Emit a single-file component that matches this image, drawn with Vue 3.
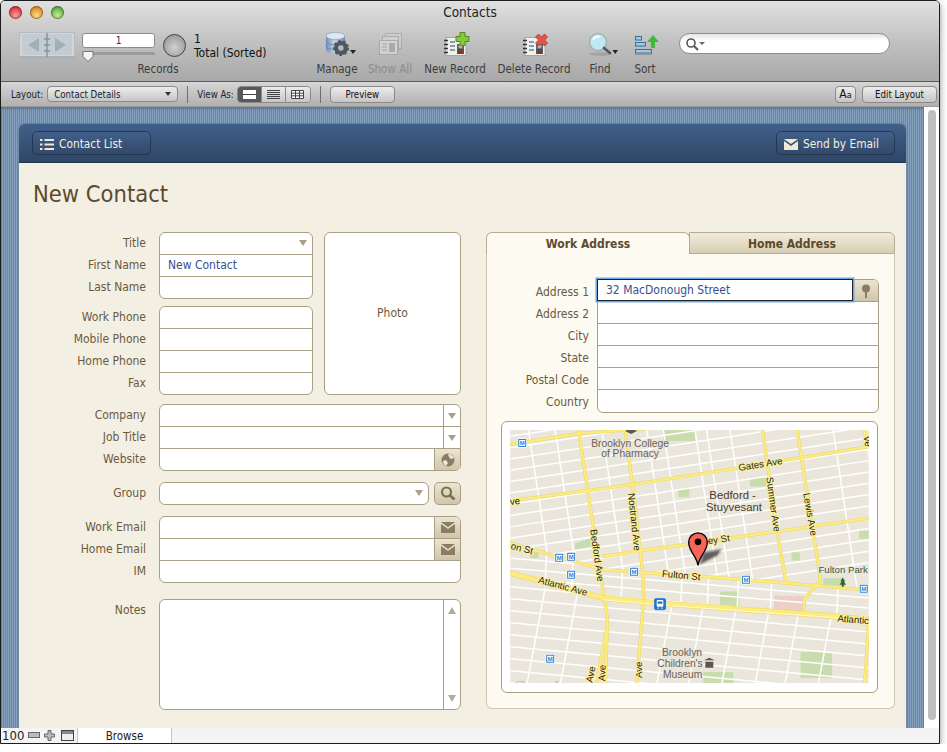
<template>
  <div class="window">
    <header class="chrome">
      <div class="titlebar">
        <div class="lights">
          <span class="light red"></span>
          <span class="light amber"></span>
          <span class="light green"></span>
        </div>
        <div class="win-title">Contacts</div>
        <div></div>
      </div>
      <div class="toolbar">
        <div class="records">
          <div class="rec-top">
            <svg class="book" width="56" height="27" viewBox="0 0 56 27">
              <rect x="0.5" y="0.5" width="55" height="25" fill="#d0d6da" stroke="#b4bcc2" />
              <rect x="3" y="2" width="24" height="21" fill="#c4ccd2" />
              <rect x="29" y="2" width="24" height="21" fill="#c4ccd2" />
              <rect x="0" y="24" width="56" height="3" fill="#aab2b8" />
              <path d="M9 13l11-7v14z" fill="#9fb0ba" />
              <path d="M47 13l-11-7v14z" fill="#9fb0ba" />
              <path d="M28 1v24M25 7h6M25 13h6M25 19h6" stroke="#87939b" stroke-width="1.5" fill="none" />
            </svg>
            <div class="rec-input">
              <div class="rec-field">1</div>
              <div class="slider">
                <svg class="thumb" width="12" height="11" viewBox="0 0 12 11">
                  <path d="M1 .5h10v5l-5 5-5-5z" fill="#f4f4f4" stroke="#777" />
                </svg>
              </div>
            </div>
            <div class="pie"></div>
            <div class="rec-count">
              <div>1</div>
              <div>Total (Sorted)</div>
            </div>
          </div>
          <div class="tool-label">Records</div>
        </div>

        <div class="tool w-manage">
          <svg width="40" height="28" viewBox="0 0 40 28">
            <defs>
              <linearGradient id="dbg" x1="0" x2="1" y1="0" y2="0">
                <stop offset="0" stop-color="#6f8db4" />
                <stop offset="0.45" stop-color="#c4d4e6" />
                <stop offset="1" stop-color="#6c88ac" />
              </linearGradient>
            </defs>
            <path d="M9 5v13c0 3 4 4.500 9.500 4.500S28 21 28 18V5z" fill="url(#dbg)" />
            <ellipse cx="18.500" cy="5" rx="9.500" ry="3.500" fill="#dfe8f2" stroke="#7f96b2" stroke-width="0.6" />
            <path d="M9 9.500c0 3 4 4.500 9.500 4.500S28 12.500 28 9.500M9 14c0 3 4 4.500 9.500 4.500S28 17 28 14" stroke="#6a83a3" stroke-width="0.8" fill="none" />
            <circle cx="24" cy="17" r="5" fill="none" stroke="#4e565e" stroke-width="4" />
            <circle cx="24" cy="17" r="7" fill="none" stroke="#4e565e" stroke-width="2" stroke-dasharray="2.500 2.500" />
            <circle cx="24" cy="17" r="2.200" fill="#b5bcc2" />
            <path d="M33 19h6l-3 4z" fill="#222" />
          </svg>
          <div class="tool-label">Manage</div>
        </div>

        <div class="tool w-show">
          <svg width="28" height="28" viewBox="0 0 28 28" opacity="0.55">
            <rect x="9.500" y="2.500" width="16" height="15" fill="#d4d4d4" stroke="#9a9a9a" />
            <rect x="6.500" y="5.500" width="16" height="15" fill="#dadada" stroke="#9a9a9a" />
            <rect x="3.500" y="9.500" width="18" height="14" fill="#e4e4e4" stroke="#9a9a9a" />
            <rect x="13" y="12" width="6" height="9" fill="#a69a8c" />
            <path d="M6 13h5M6 16h5M6 19h5" stroke="#888" />
          </svg>
          <div class="tool-label off">Show All</div>
        </div>

        <div class="tool w-new">
          <svg width="30" height="28" viewBox="0 0 30 28">
            <rect x="6" y="6.500" width="20" height="18" fill="#eef2ee" stroke="#8c948c" stroke-width="0.7" />
            <path d="M4 9.500h4M4 13.500h4M4 17.500h4M4 21.500h4" stroke="#333" stroke-width="1.400" />
            <path d="M10 11h5M10 15h5M10 19h5" stroke="#69808c" stroke-width="1.400" />
            <rect x="17" y="13" width="7" height="10" fill="#456a86" />
            <circle cx="20.500" cy="15.500" r="2" fill="#e6a47e" />
            <rect x="17.500" y="18" width="6" height="5" fill="#7c3a22" />
            <path d="M20 1.500h5v4h4v5h-4v4h-5v-4h-4v-5h4z" fill="#86c83e" stroke="#4f8a1e" />
          </svg>
          <div class="tool-label">New Record</div>
        </div>

        <div class="tool w-del">
          <svg width="30" height="28" viewBox="0 0 30 28">
            <rect x="6" y="6.500" width="20" height="18" fill="#eef2ee" stroke="#8c948c" stroke-width="0.7" />
            <path d="M4 9.500h4M4 13.500h4M4 17.500h4M4 21.500h4" stroke="#333" stroke-width="1.400" />
            <path d="M10 11h5M10 15h5M10 19h5" stroke="#69808c" stroke-width="1.400" />
            <rect x="17" y="13" width="7" height="10" fill="#456a86" />
            <circle cx="20.500" cy="15.500" r="2" fill="#e6a47e" />
            <rect x="17.500" y="18" width="6" height="5" fill="#7c3a22" />
            <path d="M19.500 3l3 3 3-3 3 3-3 3 3 3-3 3-3-3-3 3-3-3 3-3-3-3z" fill="#e4534a" stroke="#a52a24" stroke-width="0.7" />
          </svg>
          <div class="tool-label">Delete Record</div>
        </div>

        <div class="tool w-find">
          <svg width="36" height="28" viewBox="0 0 36 28">
            <ellipse cx="18" cy="23" rx="11" ry="1.800" fill="#8e8e8e" opacity="0.5" />
            <circle cx="16" cy="11" r="8.500" fill="#bfe8f2" stroke="#a4b2b8" stroke-width="1.600" />
            <path d="M11 9a6 6 0 0 1 7-3" stroke="#fff" stroke-width="1.600" fill="none" />
            <path d="M22 17l6 5" stroke="#555" stroke-width="2.600" stroke-linecap="round" />
            <path d="M30.500 19h5.500l-2.750 4z" fill="#222" />
          </svg>
          <div class="tool-label">Find</div>
        </div>

        <div class="tool w-sort">
          <svg width="28" height="28" viewBox="0 0 28 28">
            <rect x="4.500" y="5.500" width="6" height="3.500" fill="#a5c7e0" stroke="#33709c" />
            <rect x="4.500" y="11.500" width="10" height="3.500" fill="#a5c7e0" stroke="#33709c" />
            <rect x="4.500" y="18.500" width="16" height="3.500" fill="#a5c7e0" stroke="#33709c" />
            <path d="M22 4l6 7h-4v6h-4v-6h-4z" fill="#3fbb3c" />
            <rect x="4" y="23" width="17" height="1" fill="#999" />
          </svg>
          <div class="tool-label">Sort</div>
        </div>

        <div class="search">
          <svg width="22" height="14" viewBox="0 0 22 14">
            <circle cx="6" cy="6" r="4" fill="none" stroke="#555" stroke-width="1.600" />
            <path d="M9 9l4 4" stroke="#555" stroke-width="2" />
            <path d="M14 5h6l-3 3z" fill="#666" />
          </svg>
        </div>
      </div>
    </header>

    <div class="layoutbar">
      <span class="lb-label">Layout:</span>
      <div class="lb-select">
        <span>Contact Details</span>
        <i class="lb-caret"></i>
      </div>
      <span class="lb-sep"></span>
      <span class="lb-label">View As:</span>
      <div class="segs">
        <span class="seg on">
          <svg width="13" height="9" viewBox="0 0 13 9">
            <rect width="13" height="9" fill="#fff" />
            <rect y="4" width="13" height="1" fill="#444" />
          </svg>
        </span>
        <span class="seg">
          <svg width="13" height="9" viewBox="0 0 13 9">
            <path d="M0 .5h13M0 2.500h13M0 4.500h13M0 6.500h13M0 8.500h13" stroke="#444" />
          </svg>
        </span>
        <span class="seg">
          <svg width="13" height="9" viewBox="0 0 13 9">
            <path d="M.5.5h12v8H.5zM.5 3.200h12M.5 5.800h12M4.500.5v8M8.500.5v8" stroke="#444" fill="#fff" />
          </svg>
        </span>
      </div>
      <span class="lb-sep"></span>
      <button class="lb-btn preview">Preview</button>
      <span class="lb-gap"></span>
      <button class="lb-btn aa">A<small>a</small></button>
      <button class="lb-btn edit">Edit Layout</button>
    </div>

    <div class="main">
      <div class="stripes">
        <section class="card">
          <div class="card-head">
            <button class="head-btn">
              <svg width="14" height="11" viewBox="0 0 14 11">
                <path d="M0 1h2.500M4.500 1H14M0 5.500h2.500M4.500 5.500H14M0 10h2.500M4.500 10H14" stroke="#f1e9d6" stroke-width="2" />
              </svg>
              Contact List
            </button>
            <button class="head-btn">
              <svg width="14" height="11" viewBox="0 0 14 11">
                <path d="M0 0h14L7 5z" fill="#f1e9d6" />
                <path d="M0 2l7 5 7-5v9H0z" fill="#f1e9d6" />
              </svg>
              Send by Email
            </button>
          </div>

          <div class="card-body">
            <h1 class="page-title">New Contact</h1>
            <div class="columns">
              <div class="left">
                <div class="top-block">
                  <div class="top-fields">
                    <div class="line">
                      <div class="labels">
                        <div>Title</div>
                        <div>First Name</div>
                        <div>Last Name</div>
                      </div>
                      <div class="fields">
                        <div class="f"><i class="caret right-caret"></i></div>
                        <div class="f val">New Contact</div>
                        <div class="f"></div>
                      </div>
                    </div>
                    <div class="line">
                      <div class="labels">
                        <div>Work Phone</div>
                        <div>Mobile Phone</div>
                        <div>Home Phone</div>
                        <div>Fax</div>
                      </div>
                      <div class="fields">
                        <div class="f"></div>
                        <div class="f"></div>
                        <div class="f"></div>
                        <div class="f"></div>
                      </div>
                    </div>
                  </div>
                  <div class="photo">Photo</div>
                </div>

                <div class="line gap-9">
                  <div class="labels">
                    <div>Company</div>
                    <div>Job Title</div>
                    <div>Website</div>
                  </div>
                  <div class="fields">
                    <div class="f"><span class="drop"><i class="caret"></i></span></div>
                    <div class="f"><span class="drop"><i class="caret"></i></span></div>
                    <div class="f">
                      <span class="side">
                        <svg width="14" height="14" viewBox="0 0 14 14">
                          <circle cx="7" cy="7" r="6.500" fill="#8a7d66" />
                          <path d="M7 1c3 0 5 2 6 4l-3 1-2-2zM2 8l3-1 2 3-2 3c-2-1-3-3-3-5z" fill="#efe8d8" />
                        </svg>
                      </span>
                    </div>
                  </div>
                </div>

                <div class="line gap-11">
                  <div class="labels"><div>Group</div></div>
                  <div class="group-row">
                    <div class="fields grow">
                      <div class="f"><i class="caret right-caret"></i></div>
                    </div>
                    <div class="search-btn">
                      <svg width="16" height="15" viewBox="0 0 16 15">
                        <circle cx="6.500" cy="6" r="4.500" fill="none" stroke="#7a6f58" stroke-width="2.200" />
                        <path d="M10 9.500l4.500 4" stroke="#7a6f58" stroke-width="2.800" />
                      </svg>
                    </div>
                  </div>
                </div>

                <div class="line gap-11">
                  <div class="labels">
                    <div>Work Email</div>
                    <div>Home Email</div>
                    <div>IM</div>
                  </div>
                  <div class="fields">
                    <div class="f">
                      <span class="side">
                        <svg width="14" height="11" viewBox="0 0 14 11">
                          <path d="M0 0h14L7 5z" fill="#8a7d66" />
                          <path d="M0 2l7 5 7-5v9H0z" fill="#8a7d66" />
                        </svg>
                      </span>
                    </div>
                    <div class="f">
                      <span class="side">
                        <svg width="14" height="11" viewBox="0 0 14 11">
                          <path d="M0 0h14L7 5z" fill="#8a7d66" />
                          <path d="M0 2l7 5 7-5v9H0z" fill="#8a7d66" />
                        </svg>
                      </span>
                    </div>
                    <div class="f"></div>
                  </div>
                </div>

                <div class="line gap-16">
                  <div class="labels"><div>Notes</div></div>
                  <div class="notes">
                    <div class="notes-bar">
                      <i class="tri up"></i>
                      <i class="tri"></i>
                    </div>
                  </div>
                </div>
              </div>

              <div class="right">
                <div class="tabs">
                  <div class="tab active">Work Address</div>
                  <div class="tab">Home Address</div>
                </div>
                <div class="panel">
                  <div class="addr">
                    <div class="labels addr-labels">
                      <div>Address 1</div>
                      <div>Address 2</div>
                      <div>City</div>
                      <div>State</div>
                      <div>Postal Code</div>
                      <div>Country</div>
                    </div>
                    <div class="fields addr-fields">
                      <div class="f f-first">
                        <div class="focus">32 MacDonough Street</div>
                        <span class="pin-btn">
                          <svg width="10" height="14" viewBox="0 0 10 14">
                            <circle cx="5" cy="4.500" r="4" fill="#8a7d66" />
                            <rect x="4" y="8" width="2" height="6" fill="#8a7d66" />
                          </svg>
                        </span>
                      </div>
                      <div class="f"></div>
                      <div class="f"></div>
                      <div class="f"></div>
                      <div class="f"></div>
                      <div class="f"></div>
                    </div>
                  </div>

                  <div class="map-box">
                    <svg class="map" width="359" height="253" viewBox="60 45 1077 760">
                      <defs>
                        <clipPath id="north">
                          <path d="M60 45H1137V525L890 505 640 485 340 465 130 405 60 385z" />
                        </clipPath>
                        <clipPath id="middle">
                          <path d="M60 385L130 405 340 465 640 485 890 505 1137 525V615L1040 605 500 565 340 550 60 475z" />
                        </clipPath>
                        <clipPath id="south">
                          <path d="M60 475L340 550 500 565 1040 605 1137 615V805H60z" />
                        </clipPath>
                        <filter id="soft" x="-20%" y="-20%" width="140%" height="140%">
                          <feGaussianBlur stdDeviation="3" />
                        </filter>
                      </defs>
                      <rect x="60" y="45" width="1077" height="760" fill="#ebe6dc" />

                      <g fill="#c9dcae">
                        <rect x="520" y="45" width="95" height="33" />
                        <rect x="565" y="222" width="33" height="25" />
                        <rect x="780" y="188" width="48" height="27" />
                        <path d="M255 385l45-15 8 25-53 8z" />
                        <rect x="690" y="530" width="58" height="45" />
                        <rect x="932" y="712" width="95" height="78" />
                        <rect x="640" y="772" width="90" height="33" />
                        <rect x="905" y="412" width="25" height="25" />
                        <rect x="1108" y="348" width="29" height="24" />
                        <rect x="1000" y="490" width="65" height="22" />
                        <rect x="120" y="410" width="25" height="20" />
                      </g>
                      <rect x="852" y="543" width="88" height="47" fill="#ebd0c8" />

                      <g stroke="#fff" stroke-width="4.500" fill="none">
                        <g clip-path="url(#north)">
                          <line v-for="s in northStreets" :key="s.k" :x1="s.x1" :y1="s.y1" :x2="s.x2" :y2="s.y2" />
                        </g>
                        <g clip-path="url(#middle)">
                          <line v-for="s in middleStreets" :key="s.k" :x1="s.x1" :y1="s.y1" :x2="s.x2" :y2="s.y2" />
                        </g>
                        <g clip-path="url(#south)">
                          <line v-for="s in southStreets" :key="s.k" :x1="s.x1" :y1="s.y1" :x2="s.x2" :y2="s.y2" />
                        </g>
                      </g>

                      <g fill="none" stroke-linejoin="round">
                        <g stroke="#e9d56e" stroke-width="10">
                          <path v-for="r in roads" :key="r" :d="r" />
                        </g>
                        <g stroke="#fdec7c" stroke-width="7">
                          <path v-for="r in roads" :key="r" :d="r" />
                        </g>
                        <path d="M60 475L340 550 500 565 1040 605 1137 615" stroke="#e9d56e" stroke-width="17" />
                        <path d="M60 475L340 550 500 565 1040 605 1137 615" stroke="#fdec7c" stroke-width="14" />
                        <path d="M340 555L500 570 1040 609 1137 619" stroke="#fff" stroke-width="2" />
                      </g>

                      <g class="road-labels">
                        <text v-for="l in roadLabels" :key="l.t + l.x" :transform="`translate(${l.x} ${l.y}) rotate(${l.r})`">{{ l.t }}</text>
                      </g>
                      <g class="place-labels">
                        <text x="420" y="95">Brooklyn College</text>
                        <text x="420" y="127">of Pharmacy</text>
                        <text x="728" y="253" class="dark">Bedford -</text>
                        <text x="732" y="288" class="dark">Stuyvesant</text>
                        <text x="1060" y="475" class="green">Fulton Park</text>
                        <text x="576" y="724">Brooklyn</text>
                        <text x="570" y="757">Children's</text>
                        <text x="578" y="790">Museum</text>
                      </g>
                      <text x="68" y="838" class="google">Google</text>

                      <g v-for="m in metros" :key="m.x + '-' + m.y" :transform="`translate(${m.x} ${m.y})`">
                        <rect x="-14" y="-14" width="28" height="28" rx="3" fill="#fff" />
                        <rect x="-12" y="-12" width="24" height="24" rx="2" fill="#2f7fd6" />
                        <rect x="-9" y="-9" width="18" height="18" fill="#fff" />
                        <text class="metro-m" y="7">M</text>
                      </g>
                      <g transform="translate(510 568)">
                        <rect x="-19" y="-19" width="38" height="38" rx="7" fill="#1f74cc" stroke="#fff" stroke-width="2" />
                        <rect x="-10" y="-12" width="20" height="20" rx="3" fill="#fff" />
                        <rect x="-7" y="-8" width="14" height="7" fill="#1f74cc" />
                        <path d="M-8 12h5M3 12h5" stroke="#fff" stroke-width="3" />
                      </g>
                      <path d="M420 36h3v-6h-3zM405 48l18-9 18 9-18 9z" fill="#5e564a" />
                      <path d="M642 737l16-8 16 8zM646 741h24v18h-24z" fill="#5e564a" />
                      <path d="M1058 488l8 12h-4l7 10h-7v6h-6v-6h-7l7-10h-4z" fill="#33603e" />

                      <path d="M628 450L642 412 695 403 682 422z" fill="#333" opacity="0.75" filter="url(#soft)" />
                      <path d="M624 452c-3-28-28-42-28-70a28 28 0 0 1 56 0c0 28-25 42-28 70z" fill="#f76458" stroke="#000" stroke-width="4" />
                      <circle cx="624" cy="381" r="10" fill="#000" />
                    </svg>
                  </div>
                </div>
              </div>
            </div>
          </div>
        </section>
      </div>
      <div class="scroll">
        <div class="scroll-thumb"></div>
      </div>
    </div>

    <footer class="status">
      <span class="zoom">100</span>
      <svg class="st-minus" width="12" height="7" viewBox="0 0 12 7"><rect x=".5" y=".5" width="11" height="5" fill="#bbb" stroke="#666" /></svg>
      <svg class="st-plus" width="11" height="11" viewBox="0 0 11 11"><path d="M4 .5h3v3.500h3.500v3H7v3.500H4V7H.5V4H4z" fill="#bbb" stroke="#666" /></svg>
      <svg class="st-split" width="13" height="11" viewBox="0 0 13 11"><rect x=".5" y=".5" width="12" height="10" fill="#eee" stroke="#444" /><rect x="1" y="1" width="11" height="3" fill="#888" /></svg>
      <span class="mode">Browse</span>
    </footer>
  </div>
</template>

<script setup>
const makeLines = (prefix, items, fn) =>
  items.map((c, i) => ({ k: prefix + i, ...fn(c) }))

const steps = (from, to, step) => {
  const out = []
  for (let v = from; v <= to; v += step) out.push(v)
  return out
}

// cross streets and avenues, each block of the map leans its own way
const northStreets = [
  ...makeLines('a', steps(30, 640, 34), (c) => ({ x1: 60, y1: c, x2: 1137, y2: c - 165 })),
  ...makeLines('b', [115, 195, 335, 520, 615, 720, 1030, 1125, 650, 470], (c) => ({ x1: c, y1: 45, x2: c + 78, y2: 560 })),
]
const middleStreets = [
  ...makeLines('c', steps(430, 540, 30), (c) => ({ x1: 60, y1: c, x2: 1137, y2: c + 90 })),
  ...makeLines('d', [170, 250, 400, 580, 660, 750, 850, 1050], (c) => ({ x1: c, y1: 400, x2: c - 10, y2: 620 })),
]
const southStreets = [
  ...makeLines('e', steps(480, 830, 36), (c) => ({ x1: 60, y1: c, x2: 1137, y2: c + 100 })),
  ...makeLines('f', [165, 265, 555, 650, 750, 850, 940, 1040], (c) => ({ x1: c, y1: 520, x2: c - 55, y2: 810 })),
]

const roads = [
  'M60 88L270 55 480 40',
  'M60 258L420 210 740 160 1137 95',
  'M265 45L310 340 350 600 352 630 320 805',
  'M352 630L345 805',
  'M405 45L430 230 460 490 460 560 440 805',
  'M818 45L860 340 888 500',
  'M922 45L990 480 990 500 945 550 940 600',
  'M335 425L720 370 1137 310',
  'M60 385L130 405 340 465 640 485 890 505 1137 525',
  'M1137 620L1125 805',
  'M1122 45L1137 90',
]

const roadLabels = [
  { t: 'Gates Ave', x: 747, y: 168, r: -9 },
  { t: 'Nostrand Ave', x: 414, y: 236, r: 84 },
  { t: 'Bedford Ave', x: 300, y: 345, r: 82 },
  { t: 'Summer Ave', x: 829, y: 188, r: 82 },
  { t: 'Lewis Ave', x: 940, y: 236, r: 80 },
  { t: 'ey St', x: 655, y: 388, r: -8 },
  { t: 'on St', x: 60, y: 402, r: 14 },
  { t: 'Fulton St', x: 515, y: 486, r: 5 },
  { t: 'Atlantic Ave', x: 143, y: 504, r: 15 },
  { t: 'Atlantic', x: 1042, y: 620, r: 5 },
  { t: 've', x: 60, y: 270, r: -6 },
  { t: 'Ave', x: 306, y: 805, r: -78 },
  { t: 'Ave', x: 345, y: 800, r: -88 },
  { t: 'Ave', x: 456, y: 790, r: -90 },
  { t: 've', x: 1122, y: 66, r: 82 },
]

const metros = [
  { x: 96, y: 84 },
  { x: 207, y: 429 },
  { x: 243, y: 426 },
  { x: 243, y: 480 },
  { x: 432, y: 471 },
  { x: 768, y: 495 },
  { x: 1122, y: 522 },
  { x: 180, y: 732 },
]
</script>

<style>
html,
body {
  margin: 0;
  background: #fff;
}
</style>

<style scoped>
.window {
  width: 940px;
  height: 744px;
  box-sizing: border-box;
  border: 1px solid #1c1c1c;
  border-radius: 5px 5px 0 0;
  box-shadow: 0 3px 7px rgba(0, 0, 0, 0.45);
  display: flex;
  flex-direction: column;
  overflow: hidden;
  font-family: "DejaVu Sans", sans-serif;
  font-stretch: condensed;
  font-size: 12px;
  background: #fff;
}

.chrome {
  height: 81px;
  flex: none;
  box-sizing: border-box;
  border-bottom: 1px solid #5a5a5a;
  background: linear-gradient(#e0e0e0, #bcbcbc 60%, #a9a9a9);
}

.titlebar {
  height: 22px;
  display: grid;
  grid-template-columns: 1fr auto 1fr;
  align-items: center;
}

.lights {
  display: flex;
  gap: 8px;
  padding-left: 8px;
}

.light {
  width: 13px;
  height: 13px;
  border-radius: 50%;
  box-shadow: inset 0 0 0 1px rgba(0, 0, 0, 0.35);
}

.red {
  background: radial-gradient(circle at 50% 70%, #f8a0a0, #d8303a 70%);
}

.amber {
  background: radial-gradient(circle at 50% 70%, #fbd88c, #d88a22 70%);
}

.green {
  background: radial-gradient(circle at 50% 70%, #c4ec98, #5fa83c 70%);
}

.win-title {
  font-size: 13.500px;
  color: #222;
}

.toolbar {
  display: flex;
  align-items: flex-start;
  padding: 8px 0 0 18px;
}

.records {
  width: 278px;
  flex: none;
  text-align: center;
}

.rec-top {
  display: flex;
  align-items: flex-start;
  height: 27px;
  text-align: left;
  margin-top: 1px;
}

.book {
  flex: none;
}

.rec-input {
  width: 73px;
  margin: 1px 0 0 7px;
  flex: none;
}

.rec-field {
  height: 13px;
  border: 1px solid #8c8c8c;
  border-radius: 3px;
  background: #fff;
  text-align: center;
  font-size: 10px;
  line-height: 13px;
  color: #1f2f6a;
}

.slider {
  position: relative;
  height: 3px;
  margin-top: 4px;
  background: #9a9a9a;
  border-radius: 2px;
}

.thumb {
  position: absolute;
  left: 0;
  top: -1px;
}

.pie {
  width: 21px;
  height: 21px;
  margin: 2px 0 0 8px;
  flex: none;
  border-radius: 50%;
  border: 1px solid #444;
  background: radial-gradient(circle at 50% 60%, #d0d0d0, #9a9a9a 80%);
}

.rec-count {
  margin: 0 0 0 8px;
  font-size: 12px;
  line-height: 14px;
  color: #111;
}

.tool-label {
  font-size: 11.500px;
  line-height: 14px;
  margin-top: 3px;
  color: #3c3c3c;
  white-space: nowrap;
}

.tool-label.off {
  color: #8c8c8c;
}

.tool {
  flex: none;
  display: flex;
  flex-direction: column;
  align-items: center;
}

.w-manage {
  width: 50px;
  margin-left: 15px;
}

.w-show {
  width: 56px;
}

.w-new {
  width: 74px;
}

.w-del {
  width: 74px;
  margin-left: 5px;
}

.w-find {
  width: 50px;
  margin-left: 4px;
}

.w-sort {
  width: 40px;
}

.search {
  width: 211px;
  height: 21px;
  margin: 2px 0 0 14px;
  padding-left: 5px;
  box-sizing: border-box;
  display: flex;
  align-items: center;
  border: 1px solid #8e8e8e;
  border-radius: 11px;
  background: linear-gradient(#e4e4e4, #fff 35%);
}

.layoutbar {
  height: 25px;
  flex: none;
  box-sizing: border-box;
  display: flex;
  align-items: center;
  padding: 0 2px 0 10px;
  border-bottom: 1px solid #9c9c9c;
  background: linear-gradient(#d6d6d6, #b0b0b0);
  font-size: 9.600px;
  color: #222;
}

.lb-label {
  white-space: nowrap;
}

.lb-select {
  width: 131px;
  height: 16px;
  box-sizing: border-box;
  margin-left: 4px;
  padding: 0 6px;
  display: flex;
  align-items: center;
  justify-content: space-between;
  border: 1px solid #8a8a8a;
  border-radius: 4px;
  background: linear-gradient(#ececec, #c6c6c6);
  color: #1c1c2e;
}

.lb-caret {
  width: 0;
  height: 0;
  border: 3.500px solid transparent;
  border-top: 4px solid #333;
  border-bottom: 0;
}

.lb-sep {
  width: 1px;
  height: 17px;
  margin: 0 9px;
  background: #6e6e6e;
}

.segs {
  display: flex;
  height: 17px;
  margin-left: 3px;
  border: 1px solid #8a8a8a;
  border-radius: 4px;
  overflow: hidden;
  box-sizing: border-box;
}

.seg {
  width: 24px;
  display: flex;
  align-items: center;
  justify-content: center;
  background: linear-gradient(#ececec, #c6c6c6);
  border-right: 1px solid #8a8a8a;
  box-sizing: border-box;
}

.seg:last-child {
  border-right: 0;
}

.seg.on {
  background: #55585c;
}

.lb-btn {
  height: 17px;
  box-sizing: border-box;
  border: 1px solid #8a8a8a;
  border-radius: 4px;
  background: linear-gradient(#ececec, #c6c6c6);
  font: inherit;
  font-stretch: condensed;
  color: #111;
  padding: 0;
}

.preview {
  width: 65px;
}

.lb-gap {
  flex: 1;
}

.aa {
  width: 21px;
  margin-right: 6px;
  font-size: 12px;
}

.aa small {
  font-size: 9px;
}

.edit {
  width: 75px;
}

.main {
  flex: 1;
  display: flex;
  min-height: 0;
}

.stripes {
  flex: 1;
  display: flex;
  padding: 17px 18px 0;
  background: repeating-linear-gradient(90deg, #6c88a8 0 1px, #84a0bc 1px 2px);
  box-shadow: inset 0 2px 2px rgba(30, 40, 60, 0.25);
}

.card {
  flex: 1;
  display: flex;
  flex-direction: column;
  border-radius: 5px 5px 0 0;
  background: #f4efe3;
  box-shadow: 0 0 2px rgba(30, 50, 80, 0.6);
}

.card-head {
  height: 39px;
  flex: none;
  box-sizing: border-box;
  display: flex;
  align-items: center;
  justify-content: space-between;
  padding: 0 11px 0 13px;
  border-radius: 5px 5px 0 0;
  background: linear-gradient(#41608a, #2f4666);
  border-bottom: 1px solid #22344e;
}

.head-btn {
  width: 119px;
  height: 24px;
  box-sizing: border-box;
  display: flex;
  align-items: center;
  gap: 5px;
  padding: 2px 0 0 7px;
  border: 1px solid #26384f;
  border-radius: 5px;
  background: linear-gradient(#41608a, #33496a);
  color: #f5efe0;
  font: inherit;
  font-stretch: condensed;
  font-size: 11.800px;
}

.card-body {
  padding: 0 11px 0 14px;
}

.page-title {
  margin: 0 0 7px;
  height: 62px;
  line-height: 62px;
  font-size: 23.500px;
  font-weight: normal;
  color: #5c4a2c;
}

.columns {
  display: flex;
  gap: 25px;
}

.left {
  width: 428px;
  flex: none;
}

.right {
  width: 409px;
  flex: none;
}

.line {
  display: flex;
  align-items: flex-start;
}

.labels {
  width: 113px;
  margin-right: 13px;
  flex: none;
  text-align: right;
  color: #6b5a3e;
}

.labels div {
  height: 22px;
  line-height: 22px;
}

.fields {
  flex: 1;
  border: 1px solid #a99f85;
  border-radius: 6px;
  background: #fff;
  overflow: hidden;
}

.fields.grow {
  flex: 1;
}

.f {
  height: 21px;
  position: relative;
  box-sizing: content-box;
  border-bottom: 1px solid #a99f85;
  line-height: 21px;
  padding-left: 8px;
  color: #3a4f8c;
}

.f:last-child {
  border-bottom: 0;
}

.val {
  color: #3a4f8c;
}

.top-block {
  display: flex;
  gap: 11px;
}

.top-fields {
  width: 280px;
  flex: none;
  display: flex;
  flex-direction: column;
  gap: 7px;
}

.photo {
  flex: 1;
  height: 161px;
  box-sizing: content-box;
  border: 1px solid #a99f85;
  border-radius: 6px;
  background: #fff;
  display: flex;
  align-items: center;
  justify-content: center;
  color: #6b5a3e;
  line-height: 159px;
}

.gap-9 {
  margin-top: 9px;
}

.gap-11 {
  margin-top: 11px;
}

.gap-16 {
  margin-top: 16px;
}

.caret {
  display: block;
  width: 0;
  height: 0;
  border: 4px solid transparent;
  border-top: 6px solid #a99f85;
  border-bottom: 0;
}

.right-caret {
  position: absolute;
  right: 5px;
  top: 7px;
}

.drop {
  position: absolute;
  right: 0;
  top: 0;
  bottom: 0;
  width: 16px;
  border-left: 1px solid #a99f85;
  display: flex;
  align-items: center;
  justify-content: center;
}

.side {
  position: absolute;
  right: 0;
  top: 0;
  bottom: 0;
  width: 25px;
  border-left: 1px solid #a99f85;
  display: flex;
  align-items: center;
  justify-content: center;
  background: linear-gradient(#ece4d0, #d0c6aa);
}

.group-row {
  flex: 1;
  display: flex;
  gap: 5px;
}

.search-btn {
  width: 25px;
  height: 21px;
  flex: none;
  border: 1px solid #a99f85;
  border-radius: 5px;
  display: flex;
  align-items: center;
  justify-content: center;
  background: linear-gradient(#ece4d0, #d0c6aa);
}

.notes {
  flex: 1;
  height: 109px;
  border: 1px solid #a99f85;
  border-radius: 6px;
  background: #fff;
  display: flex;
  justify-content: flex-end;
}

.notes-bar {
  width: 17px;
  border-left: 1px solid #a99f85;
  display: flex;
  flex-direction: column;
  justify-content: space-between;
  align-items: center;
  padding: 7px 0;
  box-sizing: border-box;
}

.tri {
  width: 0;
  height: 0;
  border: 4px solid transparent;
  border-top: 7px solid #b5ac94;
  border-bottom: 0;
}

.tri.up {
  border-top: 0;
  border-bottom: 7px solid #b5ac94;
}

.tabs {
  display: flex;
  height: 22px;
}

.tab {
  flex: 1;
  box-sizing: border-box;
  border: 1px solid #b5ac94;
  text-align: center;
  line-height: 22px;
  font-weight: bold;
  color: #5c4a2c;
  background: linear-gradient(#f2ebda, #d8ceb4);
  border-radius: 0 6px 0 0;
  margin-left: -1px;
}

.tab.active {
  flex: none;
  width: 204px;
  margin-left: 0;
  border-radius: 6px 6px 0 0;
  background: #fdfaf2;
  border-bottom: 0;
}

.panel {
  box-sizing: border-box;
  height: 455px;
  padding: 25px 15px 0 14px;
  border: 1px solid #cfc7b2;
  border-top: 0;
  background: #fdfaf2;
  border-radius: 0 0 6px 6px;
}

.addr {
  display: flex;
}

.addr-labels {
  width: 88px;
  margin-right: 8px;
  padding-top: 2px;
}

.addr-fields {
  overflow: visible;
}

.f-first {
  padding-left: 0;
  display: flex;
}

.focus {
  width: 256px;
  height: 22px;
  margin: -1px 0 0 -1px;
  box-sizing: border-box;
  border: 1px solid #222;
  box-shadow: 0 0 0 1.500px #6aa6e8;
  padding-left: 8px;
  line-height: 21px;
  background: #fff;
  position: relative;
}

.pin-btn {
  flex: 1;
  margin-left: 1px;
  border-radius: 0 5px 0 0;
  display: flex;
  align-items: center;
  justify-content: center;
  background: linear-gradient(#ece4d0, #d0c6aa);
}

.map-box {
  margin-top: 8px;
  width: 377px;
  height: 272px;
  box-sizing: border-box;
  padding: 8px;
  border: 1px solid #a99f85;
  border-radius: 6px;
  background: #fff;
}

.map {
  display: block;
}

.road-labels text {
  font-family: "Liberation Sans", sans-serif;
  font-size: 29px;
  fill: #222;
  stroke: #fdf09a;
  stroke-width: 6px;
  paint-order: stroke;
}

.place-labels text {
  font-family: "Liberation Sans", sans-serif;
  font-size: 31px;
  fill: #6a6258;
  text-anchor: middle;
  stroke: #ebe6dc;
  stroke-width: 5px;
  paint-order: stroke;
}

.place-labels .dark {
  font-size: 34px;
  fill: #4a3c2c;
}

.place-labels .green {
  font-size: 29px;
  fill: #33603e;
}

.google {
  font-family: "Liberation Serif", serif;
  font-size: 56px;
  fill: #c2bcb2;
}

.metro-m {
  font-family: "Liberation Sans", sans-serif;
  font-size: 18px;
  font-weight: bold;
  fill: #2f7fd6;
  text-anchor: middle;
}

.scroll {
  width: 15px;
  flex: none;
  padding: 3px 3px 8px 4px;
  box-sizing: border-box;
  background: #fff;
}

.scroll-thumb {
  height: 100%;
  border-radius: 4px;
  background: #bfbfbf;
}

.status {
  height: 15px;
  flex: none;
  box-sizing: border-box;
  display: flex;
  align-items: center;
  background: #f4f4f4;
  font-size: 13px;
  color: #222;
}

.zoom {
  width: 27px;
  padding-left: 1px;
  box-sizing: border-box;
}

.st-minus {
  margin-right: 4px;
}

.st-plus {
  margin-right: 6px;
}

.st-split {
  margin-right: 3px;
}

.mode {
  width: 95px;
  align-self: stretch;
  box-sizing: border-box;
  padding-top: 1px;
  line-height: 15px;
  font-size: 11.500px;
  text-align: center;
  background: #fff;
  border-left: 1px solid #c4c4c4;
  border-right: 1px solid #c4c4c4;
}
</style>
